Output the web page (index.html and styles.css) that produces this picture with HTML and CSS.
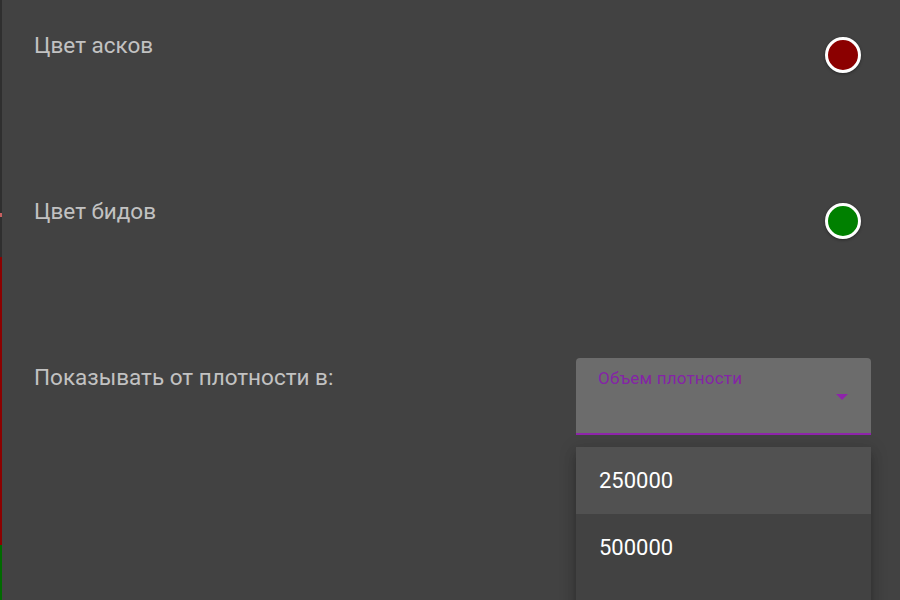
FILE: index.html
```html
<!DOCTYPE html>
<html>

<head>
    <meta charset="UTF-8">
    <title>Настройки стакана</title>
    <link rel="stylesheet" href="styles.css">
</head>

<body>
    <!-- край графика под диалогом -->
    <div class="edge">
        <div class="edge-dark"><span class="edge-tick"></span></div>
        <div class="edge-red"></div>
        <div class="edge-green"></div>
    </div>

    <div class="dialog">
        <div class="row">
            <span class="label">Цвет асков</span>
            <span class="swatch swatch-ask"></span>
        </div>
        <div class="row">
            <span class="label">Цвет бидов</span>
            <span class="swatch swatch-bid"></span>
        </div>
        <div class="row row-select">
            <span class="label">Показывать от плотности в:</span>
            <div class="field">
                <div class="select">
                    <span class="select-label">Объем плотности</span>
                    <span class="select-arrow"></span>
                </div>
                <ul class="options">
                    <li class="active">250000</li>
                    <li>500000</li>
                </ul>
            </div>
        </div>
    </div>
</body>

</html>
```

FILE: styles.css
```css
* {
    margin: 0;
    padding: 0;
    box-sizing: border-box;
}

html,
body {
    height: 100%;
    overflow: hidden;
}

body {
    background-color: #424242;
    font-family: Roboto, "Noto Sans", sans-serif;
    display: flex;
}

.edge {
    width: 2px;
    height: 100%;
    display: flex;
    flex-direction: column;
}

.edge-dark {
    position: relative;
    height: 257px;
    background-color: #2f2f2f;
}

.edge-tick {
    position: absolute;
    left: 0;
    top: 213px;
    width: 2px;
    height: 4px;
    background-color: #c86060;
}

.edge-red {
    height: 288px;
    background-color: #8b0000;
}

.edge-green {
    flex: 1;
    background-color: #006a00;
}

.dialog {
    flex: 1;
    padding: 31px 29px 0 32px;
}

.row {
    display: flex;
    justify-content: space-between;
    align-items: flex-start;
    height: 166px;
}

.label {
    font-size: 22.5px;
    line-height: 28px;
    color: #c2c2c2;
}

.swatch {
    width: 36px;
    height: 36px;
    margin-top: 6px;
    margin-right: 10px;
    border-radius: 50%;
    border: 3px solid #fff;
    box-shadow: 0 1px 3px rgba(0, 0, 0, 0.4);
}

.swatch-ask {
    background-color: #8b0000;
}

.swatch-bid {
    background-color: #008000;
}

.row-select {
    margin-top: -5px;
}

.row-select .label {
    margin-top: 5px;
}

.field {
    width: 295px;
}

.select {
    position: relative;
    height: 77px;
    padding: 10px 22px 0;
    background-color: #6c6c6c;
    border-radius: 4px 4px 0 0;
    border-bottom: 2px solid #8e24aa;
}

.select-label {
    font-size: 17px;
    letter-spacing: 0.2px;
    color: #8424a6;
}

.select-arrow {
    position: absolute;
    right: 23px;
    top: 36px;
    border-left: 6px solid transparent;
    border-right: 6px solid transparent;
    border-top: 6px solid #8e24aa;
}

.options {
    margin-top: 12px;
    padding-bottom: 80px;
    list-style: none;
    background-color: #424242;
    box-shadow: 0 5px 6px -3px rgba(0, 0, 0, 0.2), 0 9px 12px 1px rgba(0, 0, 0, 0.14), 0 3px 16px 2px rgba(0, 0, 0, 0.12);
}

.options li {
    height: 67px;
    line-height: 67px;
    padding: 0 23px;
    font-size: 22px;
    color: #fff;
}

.options li.active {
    background-color: #515151;
}
```
